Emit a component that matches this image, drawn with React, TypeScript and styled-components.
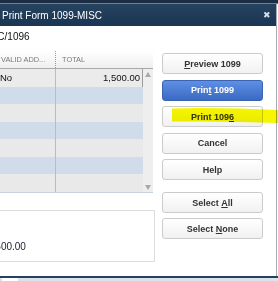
import styled, { createGlobalStyle } from "styled-components";

const GlobalStyle = createGlobalStyle`
  html, body {
    margin: 0;
    padding: 0;
    background: #ffffff;
    overflow: hidden;
  }
  body {
    font-family: "Liberation Sans", Arial, sans-serif;
  }
`;

const Frame = styled.div`
  position: relative;
  width: 278px;
  height: 281px;
  overflow: hidden;
  background: #ffffff;
  display: flex;
  flex-direction: column;
`;

const TopStrip = styled.div`
  height: 3px;
  background: #1c2d44;
  border-bottom: 1px solid #6a819d;
`;

const Middle = styled.div`
  display: flex;
  flex: 1;
`;

const Dialog = styled.div`
  width: 276px;
  display: flex;
  flex-direction: column;
`;

const Edge = styled.div`
  width: 1px;
  border-left: 1px solid #a3adb8;
  background: #ffffff;
`;

const TitleBar = styled.div`
  height: 22px;
  background: linear-gradient(#25435f, #1b3553);
  display: flex;
  align-items: center;
  justify-content: space-between;
  padding: 0 5px 0 2px;
  color: #ffffff;
  font-size: 10px;
`;

const Close = styled.span`
  color: #d9dee4;
  font-size: 9px;
  line-height: 1;
`;

const Body = styled.div`
  height: 250px;
  display: flex;
  background: #ffffff;
`;

const LeftPane = styled.div`
  margin-left: -60px;
  width: 215px;
  display: flex;
  flex-direction: column;
`;

const Subtitle = styled.div`
  font-size: 10px;
  line-height: 12px;
  color: #111;
  padding: 5px 0 0 14px;
  white-space: nowrap;
`;

const Table = styled.div`
  margin-top: 8px;
  width: 213px;
  border-bottom: 1px solid #c7d2de;
`;

const HeaderRow = styled.div`
  display: grid;
  grid-template-columns: 58px 57px 88px 10px;
  height: 17px;
  background: linear-gradient(#ffffff, #efefef);
  border-bottom: 1px solid #a9a9a9;
`;

const HeadCell = styled.div<{ $sep?: boolean }>`
  font-size: 7.4px;
  color: #7a7a7a;
  display: flex;
  align-items: center;
  padding-left: ${(p) => (p.$sep ? "6px" : "3px")};
  border-left: ${(p) => (p.$sep ? "1px dotted #9a9a9a" : "none")};
  white-space: nowrap;
`;

const TableBody = styled.div`
  display: flex;
`;

const Rows = styled.div`
  width: 203px;
`;

const Row = styled.div<{ $tone: "first" | "blue" | "gray" }>`
  display: grid;
  grid-template-columns: 58px 57px 88px;
  height: 17.5px;
  box-sizing: border-box;
  background: ${(p) => (p.$tone === "blue" ? "#d0dce9" : p.$tone === "first" ? "#ebebeb" : "#e9e9e9")};
  border-right: ${(p) => (p.$tone === "first" ? "1px solid #9c9c9c" : "none")};
  font-size: 9.5px;
  color: #111;
`;

const Cell = styled.div<{ $right?: boolean; $line?: boolean }>`
  display: flex;
  align-items: center;
  justify-content: ${(p) => (p.$right ? "flex-end" : "flex-start")};
  padding: ${(p) => (p.$right ? "0 3px 0 0" : "0 0 0 2px")};
  border-left: ${(p) => (p.$line ? "1px solid #bcbcbc" : "none")};
`;

const Scrollbar = styled.div`
  width: 10px;
  background: #eeeeee;
  display: flex;
  flex-direction: column;
  justify-content: space-between;
  align-items: center;
  padding: 3px 0 2px;
  box-sizing: border-box;
`;

const Arrow = styled.div<{ $down?: boolean }>`
  width: 0;
  height: 0;
  border-left: 3.5px solid transparent;
  border-right: 3.5px solid transparent;
  ${(p) => (p.$down ? "border-top: 5px solid #a8a8a8;" : "border-bottom: 5px solid #a8a8a8;")}
`;

const Summary = styled.div`
  margin-top: 17px;
  height: 52px;
  box-sizing: border-box;
  border: 1px solid #dcdcdc;
  padding: 30px 0 0 46px;
  font-size: 10px;
  color: #1c1c30;
`;

const ButtonCol = styled.div`
  margin-left: 7px;
  width: 101px;
  padding-top: 27px;
  display: flex;
  flex-direction: column;
`;

const Group = styled.div<{ $gap: number }>`
  display: flex;
  flex-direction: column;
  gap: ${(p) => p.$gap}px;
  & + & {
    margin-top: 12px;
  }
`;

const Button = styled.div<{ $primary?: boolean }>`
  height: 21px;
  box-sizing: border-box;
  border-radius: 3px;
  border: 1px solid ${(p) => (p.$primary ? "#3a63b4" : "#cbcbcb")};
  background: ${(p) =>
    p.$primary ? "linear-gradient(#5e90e4, #3b69c3)" : "linear-gradient(#ffffff, #f1f1f1)"};
  color: ${(p) => (p.$primary ? "#ffffff" : "#333333")};
  font-size: 9px;
  font-weight: bold;
  display: flex;
  align-items: center;
  justify-content: center;
  white-space: nowrap;

  u {
    text-decoration: underline;
  }
`;

const Bottom = styled.div`
  height: 5px;
  border-top: 2px solid #26405f;
  box-sizing: border-box;
  background: #dbe2ea;
  display: flex;
  padding-left: 2px;
`;

const TaskTab = styled.div`
  width: 16px;
  background: #ffffff;
`;

const Highlight = styled.svg`
  position: absolute;
  left: 0;
  top: 0;
  pointer-events: none;
  mix-blend-mode: multiply;
`;

const rows: ("blue" | "gray")[] = ["blue", "gray", "blue", "gray", "blue", "gray"];

export default function App() {
  return (
    <>
      <GlobalStyle />
      <Frame>
        <TopStrip />
        <Middle>
          <Dialog>
            <TitleBar>
              <span>Print Form 1099-MISC</span>
              <Close>✖</Close>
            </TitleBar>
            <Body>
              <LeftPane>
                <Subtitle>1099-MISC/1096</Subtitle>
                <Table>
                  <HeaderRow>
                    <HeadCell />
                    <HeadCell>VALID ADD...</HeadCell>
                    <HeadCell $sep>TOTAL</HeadCell>
                    <HeadCell />
                  </HeaderRow>
                  <TableBody>
                    <Rows>
                      <Row $tone="first">
                        <Cell />
                        <Cell>No</Cell>
                        <Cell $right $line>
                          1,500.00
                        </Cell>
                      </Row>
                      {rows.map((tone, i) => (
                        <Row key={i} $tone={tone}>
                          <Cell />
                          <Cell />
                          <Cell $line />
                        </Row>
                      ))}
                    </Rows>
                    <Scrollbar>
                      <Arrow />
                      <Arrow $down />
                    </Scrollbar>
                  </TableBody>
                </Table>
                <Summary>1,500.00</Summary>
              </LeftPane>
              <ButtonCol>
                <Group $gap={5.5}>
                  <Button>
                    <u>P</u>review 1099
                  </Button>
                  <Button $primary>
                    Prin<u>t</u>&nbsp;1099
                  </Button>
                  <Button>
                    Print 109<u>6</u>
                  </Button>
                  <Button>Cancel</Button>
                  <Button>Help</Button>
                </Group>
                <Group $gap={5}>
                  <Button>
                    Select&nbsp;<u>A</u>ll
                  </Button>
                  <Button>
                    Select&nbsp;<u>N</u>one
                  </Button>
                </Group>
              </ButtonCol>
            </Body>
          </Dialog>
          <Edge />
        </Middle>
        <Bottom>
          <TaskTab />
        </Bottom>
        <Highlight width="278" height="281" viewBox="0 0 278 281">
          <path d="M172 108.5 L200 108 L240 108.5 L278 110 L278 123 L240 122 L200 121.5 L172 121.5 Z" fill="#f6f600" />
        </Highlight>
      </Frame>
    </>
  );
}
